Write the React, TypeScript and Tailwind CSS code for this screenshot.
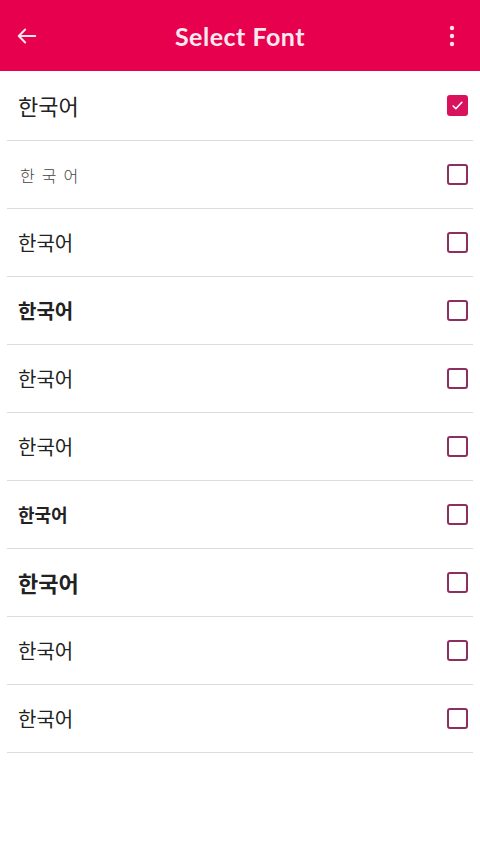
const rows = [
  { cls: "text-[22px] font-normal", text: "한국어", checked: true },
  { cls: "text-[16px] font-light tracking-[7px] text-[#444] pl-[2px]", text: "한국어" },
  { cls: "text-[20px] font-normal", text: "한국어" },
  { cls: "text-[20px] font-bold", text: "한국어" },
  { cls: "text-[20px] font-normal", text: "한국어" },
  { cls: "text-[20px] font-normal", text: "한국어" },
  { cls: "text-[18px] font-bold", text: "한국어" },
  { cls: "text-[22px] font-bold", text: "한국어" },
  { cls: "text-[20px] font-normal", text: "한국어" },
  { cls: "text-[20px] font-normal", text: "한국어" },
];

const Checkbox = ({ checked }: { checked?: boolean }) =>
  checked ? (
    <div className="w-[21px] h-[21px] rounded-[3px] bg-[#d8125c] flex items-center justify-center">
      <svg width="13" height="13" viewBox="0 0 24 24" fill="none" stroke="#fff" strokeWidth="3" strokeLinecap="round" strokeLinejoin="round">
        <path d="M4 13l5 5L20 6" />
      </svg>
    </div>
  ) : (
    <div className="w-[21px] h-[21px] rounded-[3px] border-2 border-[#8c2f5f]" />
  );

export default function App() {
  return (
    <div className="w-[480px] h-[854px] bg-white" style={{ fontFamily: '"Noto Sans CJK KR", "Noto Sans", sans-serif' }}>
      <div className="h-[71px] bg-[#e6004e] flex items-center justify-between px-[16px] text-white">
        <svg width="22" height="22" viewBox="0 0 24 24" fill="none" stroke="#fde4ee" strokeWidth="2.2" strokeLinecap="round" strokeLinejoin="round">
          <path d="M21 12H3M10 5l-7 7 7 7" />
        </svg>
        <div className="text-[25px] font-bold tracking-[0.5px] text-[#fde8f0] pt-[2px]" style={{ fontFamily: "Lato, sans-serif" }}>
          Select Font
        </div>
        <svg width="22" height="22" viewBox="0 0 22 22" fill="#fde4ee">
          <circle cx="10" cy="3" r="2.2" />
          <circle cx="10" cy="11" r="2.2" />
          <circle cx="10" cy="19" r="2.2" />
        </svg>
      </div>
      <div className="flex flex-col">
        {rows.map((r, i) => (
          <div key={i} className={`mx-[7px] border-b border-[#dcdcdc] flex items-center justify-between pl-[11px] pr-[5px] ${i === 0 ? "h-[70px]" : "h-[68px]"}`}>
            <span className={`text-[#222] ${r.cls}`}>{r.text}</span>
            <Checkbox checked={r.checked} />
          </div>
        ))}
      </div>
    </div>
  );
}
